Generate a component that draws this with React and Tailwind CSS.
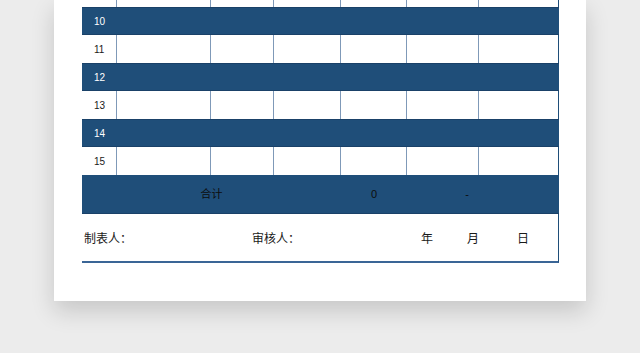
import React from "react";

const FONT = { fontFamily: '"Liberation Sans", "Noto Sans CJK SC", sans-serif' };

// 35 + 94 + 63 + 67 + 66 + 72 + 80 = 477px wide table
const COLS = "grid grid-cols-[35px_94px_63px_67px_66px_72px_80px]";

function LightRow({ n, h = "h-[28px]" }) {
  return (
    <div className={`${COLS} ${h} bg-white text-[10px] text-[#1a1a1a]`}>
      <div className="flex items-center border-r border-[#7f99b8] pl-[12px]">{n}</div>
      <div className="border-r border-[#7f99b8]" />
      <div className="border-r border-[#7f99b8]" />
      <div className="border-r border-[#7f99b8]" />
      <div className="border-r border-[#7f99b8]" />
      <div className="border-r border-[#7f99b8]" />
      <div className="border-r border-[#1f4e79]" />
    </div>
  );
}

function DarkRow({ n }) {
  return (
    <div className="flex h-[28px] items-center border-y border-[#1a4168] bg-[#1f4e79] pl-[12px] text-[10px] text-white">
      {n}
    </div>
  );
}

export default function App() {
  const rows = [10, 11, 12, 13, 14, 15];
  return (
    <div className="h-[353px] w-[640px] overflow-hidden bg-[#ececec]" style={FONT}>
      <div className="ml-[54px] w-[532px] bg-white pb-[38px] pl-[28px] shadow-[0_10px_22px_rgba(0,0,0,0.16)]">
        <div className="w-[477px]">
          {/* tail of the row above, scrolled past */}
          <LightRow h="h-[7px]" />
          {rows.map((n) =>
            n % 2 === 0 ? <DarkRow key={n} n={n} /> : <LightRow key={n} n={n} />
          )}

          {/* totals */}
          <div className={`${COLS} h-[39px] border-b border-[#1a4168] bg-[#1f4e79] text-[11px] text-[#0d0d0d]`}>
            <div className="col-span-4 flex items-center justify-center">合计</div>
            <div className="flex items-center justify-center">0</div>
            <div className="flex items-center justify-end pr-[10px]">-</div>
            <div />
          </div>

          {/* signatures */}
          <div className="flex h-[49px] items-center border-b-2 border-r border-b-[#3a6596] border-r-[#1f4e79] pl-[2px] pt-[2px] text-[12px] text-[#1a1a1a]">
            <span className="w-[168px]">制表人：</span>
            <span className="w-[169px]">审核人：</span>
            <span className="w-[46px]">年</span>
            <span className="w-[50px]">月</span>
            <span>日</span>
          </div>
        </div>
      </div>
    </div>
  );
}
